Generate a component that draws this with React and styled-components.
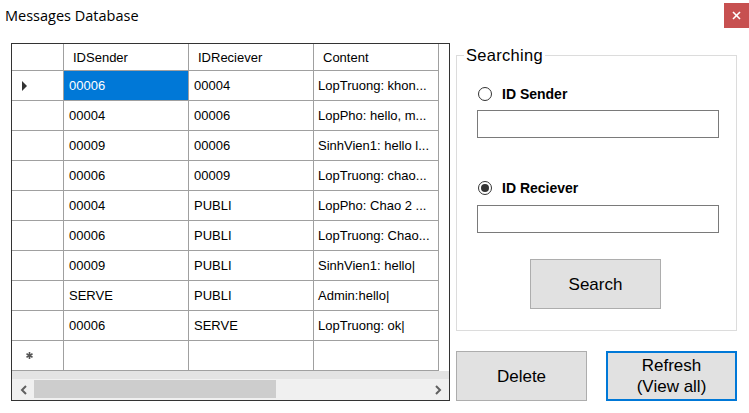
import React from 'react';
import styled, { createGlobalStyle } from 'styled-components';

const GlobalStyle = createGlobalStyle`
  html, body {
    margin: 0;
    padding: 0;
    background: #fff;
  }
  body {
    font-family: "Liberation Sans", Arial, sans-serif;
    color: #000;
  }
`;

const Window = styled.div`
  width: 749px;
  height: 413px;
  background: #fff;
  display: flex;
  flex-direction: column;
  overflow: hidden;
`;

const TitleBar = styled.div`
  height: 30px;
  display: flex;
  align-items: center;
  justify-content: space-between;
  padding-left: 5px;
`;

const Title = styled.span`
  font-family: "Open Sans", sans-serif;
  font-size: 14.5px;
  color: #000;
`;

const CloseButton = styled.div`
  width: 25px;
  height: 25px;
  background: #c75050;
  display: flex;
  align-items: center;
  justify-content: center;
`;

const Body = styled.div`
  display: flex;
  gap: 6px;
  padding: 13px 12px 0 11px;
`;

const Grid = styled.div`
  width: 439px;
  height: 358px;
  box-sizing: border-box;
  border: 1px solid #333;
  display: flex;
  flex-direction: column;
  background: #fff;
`;

const GridRow = styled.div`
  display: grid;
  grid-template-columns: 52px 125px 125px 125px 1fr;
  height: ${p => (p.$header ? 27 : 30)}px;
`;

const Cell = styled.div`
  box-sizing: border-box;
  border-right: 1px solid #a0a0a0;
  border-bottom: 1px solid #a0a0a0;
  display: flex;
  align-items: center;
  padding-left: ${p => (p.$header ? 9 : p.$content ? 4 : 5)}px;
  font-size: 13px;
  white-space: nowrap;
  overflow: hidden;
  background: ${p => (p.$selected ? '#0078d7' : '#fff')};
  color: ${p => (p.$selected ? '#fff' : '#000')};
`;

const RowHeader = styled(Cell)`
  padding-left: 10px;
`;

const Filler = styled.div`
  background: #fff;
`;

const Band = styled.div`
  height: 8px;
  background: #e3e3e3;
`;

const ScrollBar = styled.div`
  height: 21px;
  background: #f0f0f0;
  display: flex;
  align-items: flex-start;
`;

const ScrollArrow = styled.div`
  width: 22px;
  height: 21px;
  display: flex;
  align-items: center;
  justify-content: center;
`;

const ScrollThumb = styled.div`
  width: 242px;
  height: 18px;
  margin-top: 1px;
  background: #cdcdcd;
`;

const ScrollSpace = styled.div`
  flex: 1;
`;

const RightPanel = styled.div`
  width: 281px;
  height: 358px;
  display: flex;
  flex-direction: column;
`;

const GroupBox = styled.fieldset`
  margin: 0;
  padding: 0;
  height: 288px;
  box-sizing: border-box;
  border: 1px solid #dcdcdc;
`;

const Legend = styled.legend`
  margin-left: 7px;
  padding: 0 2px;
  line-height: 24px;
  font-size: 16.5px;
  letter-spacing: 0.3px;
  color: #000;
`;

const SearchForm = styled.div`
  display: flex;
  flex-direction: column;
  align-items: flex-start;
  padding-left: 20px;
`;

const RadioRow = styled.label`
  display: flex;
  align-items: center;
  height: 18px;
  margin-top: ${p => p.$top}px;
  margin-left: 1px;
  font-size: 14px;
  font-weight: bold;
`;

const RadioCircle = styled.span`
  width: 14px;
  height: 14px;
  box-sizing: border-box;
  border: 1px solid #333;
  border-radius: 50%;
  display: flex;
  align-items: center;
  justify-content: center;
  margin-right: 10px;

  &::after {
    content: '';
    width: 8px;
    height: 8px;
    border-radius: 50%;
    background: ${p => (p.$checked ? '#333' : 'transparent')};
  }
`;

const TextBox = styled.div`
  width: 242px;
  height: 28px;
  box-sizing: border-box;
  border: 1px solid #7a7a7a;
  background: #fff;
  margin-top: ${p => p.$top}px;
`;

const Button = styled.div`
  width: 131px;
  height: 50px;
  box-sizing: border-box;
  background: #e1e1e1;
  border: ${p => (p.$focused ? '2px solid #0078d7' : '1px solid #adadad')};
  display: flex;
  flex-direction: column;
  align-items: center;
  justify-content: center;
  font-size: 17px;
  line-height: 21px;
  color: #000;
`;

const SearchButton = styled(Button)`
  margin-top: 26px;
  margin-left: 53px;
`;

const ButtonRow = styled.div`
  margin-top: auto;
  display: flex;
  gap: 19px;
`;

const rows = [
  ['00006', '00004', 'LopTruong: khon...'],
  ['00004', '00006', 'LopPho: hello, m...'],
  ['00009', '00006', 'SinhVien1: hello l...'],
  ['00006', '00009', 'LopTruong: chao...'],
  ['00004', 'PUBLI', 'LopPho: Chao 2 ...'],
  ['00006', 'PUBLI', 'LopTruong: Chao...'],
  ['00009', 'PUBLI', 'SinhVien1: hello|'],
  ['SERVE', 'PUBLI', 'Admin:hello|'],
  ['00006', 'SERVE', 'LopTruong: ok|'],
];

const Triangle = () => (
  <svg width="6" height="10" viewBox="0 0 6 10">
    <polygon points="0,0 5,5 0,10" fill="#333" />
  </svg>
);

const NewRowMark = () => (
  <svg width="7" height="7" viewBox="0 0 7 7" style={{ marginLeft: 4 }}>
    <g stroke="#555" strokeWidth="1.6">
      <line x1="3.5" y1="0" x2="3.5" y2="7" />
      <line x1="0.5" y1="1.8" x2="6.5" y2="5.2" />
      <line x1="0.5" y1="5.2" x2="6.5" y2="1.8" />
    </g>
  </svg>
);

const Chevron = ({ left }) => (
  <svg width="7" height="10" viewBox="0 0 7 10">
    <polyline
      points={left ? '6,1 2,5 6,9' : '1,1 5,5 1,9'}
      fill="none"
      stroke="#606060"
      strokeWidth="2"
    />
  </svg>
);

const App = () => (
  <Window>
    <GlobalStyle />
    <TitleBar>
      <Title>Messages Database</Title>
      <CloseButton>
        <svg width="9" height="9" viewBox="0 0 9 9">
          <g stroke="#fff" strokeWidth="1.6">
            <line x1="1" y1="1" x2="8" y2="8" />
            <line x1="8" y1="1" x2="1" y2="8" />
          </g>
        </svg>
      </CloseButton>
    </TitleBar>
    <Body>
      <Grid>
        <GridRow $header>
          <RowHeader $header />
          <Cell $header>IDSender</Cell>
          <Cell $header>IDReciever</Cell>
          <Cell $header>Content</Cell>
          <Filler />
        </GridRow>
        {rows.map((r, i) => (
          <GridRow key={i}>
            <RowHeader>{i === 0 && <Triangle />}</RowHeader>
            <Cell $selected={i === 0}>{r[0]}</Cell>
            <Cell>{r[1]}</Cell>
            <Cell $content>{r[2]}</Cell>
            <Filler />
          </GridRow>
        ))}
        <GridRow>
          <RowHeader><NewRowMark /></RowHeader>
          <Cell />
          <Cell />
          <Cell />
          <Filler />
        </GridRow>
        <Band />
        <ScrollBar>
          <ScrollArrow><Chevron left /></ScrollArrow>
          <ScrollThumb />
          <ScrollSpace />
          <ScrollArrow><Chevron /></ScrollArrow>
        </ScrollBar>
      </Grid>
      <RightPanel>
        <GroupBox>
          <Legend>Searching</Legend>
          <SearchForm>
            <RadioRow $top={18}>
              <RadioCircle />
              ID Sender
            </RadioRow>
            <TextBox $top={7} />
            <RadioRow $top={41}>
              <RadioCircle $checked />
              ID Reciever
            </RadioRow>
            <TextBox $top={8} />
            <SearchButton>Search</SearchButton>
          </SearchForm>
        </GroupBox>
        <ButtonRow>
          <Button>Delete</Button>
          <Button $focused>
            <span>Refresh</span>
            <span>(View all)</span>
          </Button>
        </ButtonRow>
      </RightPanel>
    </Body>
  </Window>
);

export default App;
